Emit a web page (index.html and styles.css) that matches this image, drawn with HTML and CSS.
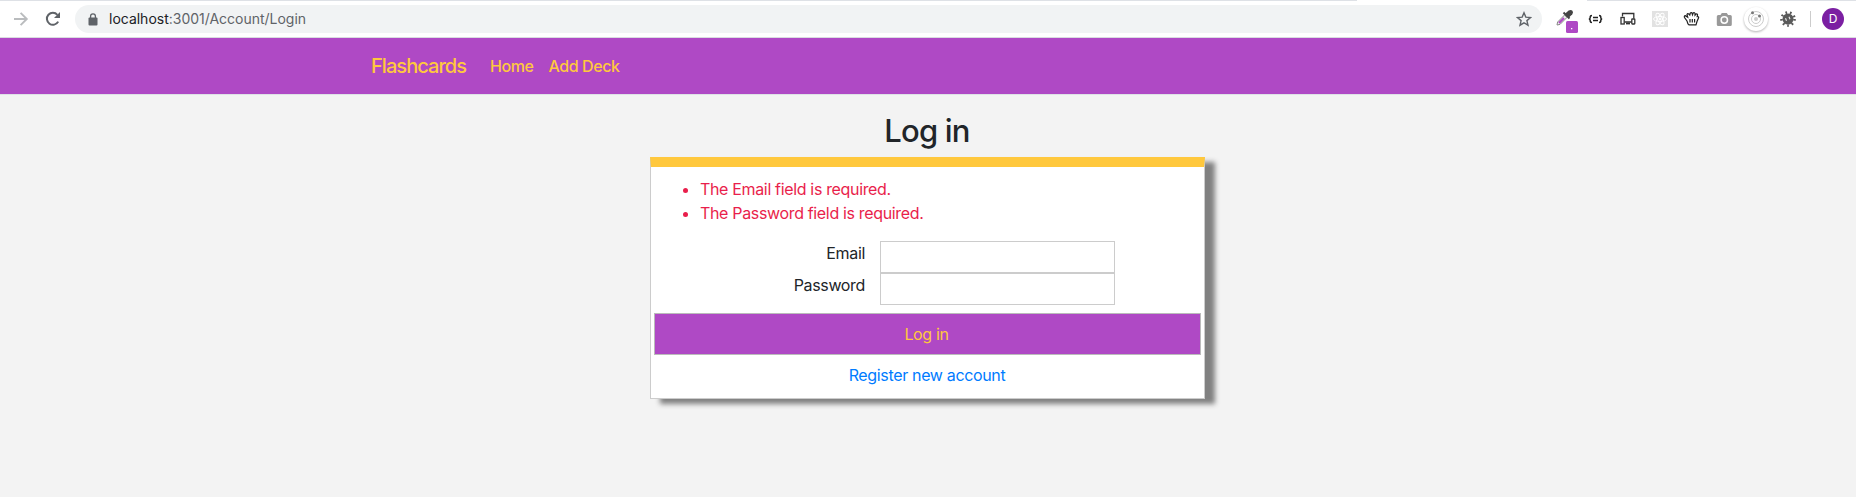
FILE: index.html
```html
<!DOCTYPE html>
<html lang="en">
<head>
<meta charset="utf-8">
<title>Log in</title>
<link rel="stylesheet" href="styles.css">
</head>
<body>
<div class="toolbar">
  <svg class="forward" width="16" height="16" viewBox="0 0 16 16" fill="none" stroke="#babcbe" stroke-width="1.9"><path d="M1 8h12.5M7.6 1.8 13.8 8l-6.2 6.2"/></svg>
  <svg class="reload" width="16" height="16" viewBox="0 0 16 16"><path d="M13.2 10.6A6 6 0 1 1 12.4 3.8" fill="none" stroke="#5f6368" stroke-width="2"/><path d="M15 1v6H9z" fill="#5f6368"/></svg>
  <div class="address">
    <svg class="lock" width="10" height="13" viewBox="0 0 10 13"><rect x="0.5" y="4.5" width="9" height="8" rx="1" fill="#5f6368"/><path d="M2.6 5V3.2a2.4 2.4 0 0 1 4.8 0V5" fill="none" stroke="#5f6368" stroke-width="1.3"/></svg>
    <span class="url"><span class="host">localhost</span>:3001/Account/Login</span>
    <svg class="star" width="16" height="16" viewBox="0 0 16 16"><path d="m8 1.8 1.8 4.3 4.7.4-3.6 3.1 1.1 4.6L8 11.8l-4 2.4 1.1-4.6-3.6-3.1 4.7-.4z" fill="none" stroke="#5f6368" stroke-width="1.4"/></svg>
  </div>
  <div class="extensions">
    <!-- colour picker with badge -->
    <svg width="32" height="36" viewBox="0 0 32 36"><path d="m9 24 .6-3 7-7 2.4 2.4-7 7z" fill="#eee" stroke="#888" stroke-width="1"/><path d="m11 22 5-5" stroke="#b04ac4" stroke-width="2.2"/><path d="m15.500 11.500 6 6" stroke="#444" stroke-width="2"/><path d="m17 12.800 3.600-3.300q2.400-1.300 3.800.2 1.300 1.600-.1 3.600L21 16.500z" fill="#444"/><rect x="18" y="20" width="12" height="12" rx="1.5" fill="#af49c5"/><rect x="23" y="27" width="1.3" height="1.3" fill="#fff"/></svg>
    <!-- json viewer -->
    <svg width="32" height="36" viewBox="0 0 32 36" fill="none" stroke="#222" stroke-width="1.5"><path d="M12 14.500q-1.800 0-1.800 1.200v1q0 1.300-1.400 1.300 1.400 0 1.400 1.300v1q0 1.200 1.800 1.200M19 14.500q1.800 0 1.800 1.200v1q0 1.300 1.400 1.300-1.400 0-1.400 1.300v1q0 1.200-1.800 1.200"/><path d="M13 16.500h5M13 19.500h5" stroke-width="1.3"/></svg>
    <!-- responsive devices -->
    <svg width="32" height="36" viewBox="0 0 32 36" fill="none" stroke="#333" stroke-width="1.3"><path d="M10.500 15.500v-3h11.300v5M12.500 21h7"/><rect x="9" y="16.500" width="3.200" height="6.500"/><rect x="19.800" y="18" width="3" height="5" rx=".5"/><path d="M14 22.500h4" stroke-width="1.800"/></svg>
    <!-- react -->
    <svg width="32" height="36" viewBox="0 0 32 36" fill="none" stroke="#fff" stroke-width="1"><rect x="8" y="10" width="16" height="16" fill="#e2e2e2" stroke="none"/><ellipse cx="16" cy="18" rx="6.500" ry="2.500"/><ellipse cx="16" cy="18" rx="6.500" ry="2.500" transform="rotate(60 16 18)"/><ellipse cx="16" cy="18" rx="6.500" ry="2.500" transform="rotate(120 16 18)"/><circle cx="16" cy="18" r="1" fill="#fff"/></svg>
    <!-- hand -->
    <svg width="32" height="36" viewBox="0 0 32 36" fill="none" stroke="#222" stroke-width="1.200"><path d="m12 23-1-3-2.500-3.500q-.6-1.700.8-1.800l2.400 1.500-.7-2.700q.5-1.500 1.800-.5l1 1 .5-2q1.200-.8 1.800.3l.4 1.500.8-2q1.400-.5 1.700.6v1.800l1.300-1.400q1.500 0 1.200 1.300l-.3 1.500q1.700-.3 1.400 1.200L21 20.500l-1 3.300h-7z"/><path d="M14 18v3.500M16.300 18v3.500M18.600 18v3.500"/></svg>
    <!-- camera -->
    <svg width="32" height="36" viewBox="0 0 32 36"><path d="M10.300 14h2.200l1.300-2h5l1.300 2h2.200q1.500 0 1.500 1.500v8q0 1.500-1.500 1.500h-12q-1.500 0-1.500-1.500v-8q0-1.500 1.500-1.500z" fill="#999"/><circle cx="16.300" cy="19" r="3.200" fill="#999" stroke="#fff" stroke-width="1.500"/></svg>
    <!-- orbit -->
    <svg width="32" height="36" viewBox="0 0 32 36" fill="none"><circle class="disc" cx="16" cy="18" r="12" fill="#fff"/><g stroke="#ccc"><circle cx="16" cy="18" r="7.500"/><circle cx="16" cy="18" r="4.500"/></g><circle cx="16" cy="18" r="2" fill="#ccc"/><circle cx="12.500" cy="11.800" r="1.500" fill="#777"/><circle cx="19.500" cy="15" r="1.500" fill="#777"/></svg>
    <!-- bug gear -->
    <svg width="32" height="36" viewBox="0 0 32 36"><circle cx="16" cy="18" r="5.500" fill="#5a5a5a"/><circle cx="16" cy="18" r="6.500" fill="none" stroke="#5a5a5a" stroke-width="2.600" stroke-dasharray="1.700 2.838"/><path d="m13.500 17.200 1 2.500M17 15.800l1 2.500" stroke="#eee" stroke-width="1.100"/></svg>
  </div>
  <div class="divider"></div>
  <div class="avatar">D</div>
</div>
<nav class="navbar">
  <a class="brand">Flashcards</a>
  <a class="nav-link">Home</a>
  <a class="nav-link">Add Deck</a>
</nav>
<main>
  <h1>Log in</h1>
  <form class="card">
    <ul class="errors"><li>The Email field is required.</li><li>The Password field is required.</li></ul>
    <div class="row"><label for="email">Email</label><input id="email" type="text"></div>
    <div class="row"><label for="password">Password</label><input id="password" type="password"></div>
    <button type="button">Log in</button>
    <a class="register">Register new account</a>
  </form>
</main>
</body>
</html>
```
FILE: styles.css
```css
* { box-sizing: border-box; }
body { margin: 0; min-height: 497px; background: #f3f3f3; color: #212529; font: 16px/24px Inter, sans-serif; letter-spacing: -0.34px; }
svg { display: block; flex: none; }
.toolbar { display: flex; align-items: center; height: 38px; padding: 1px 0 0 13px; border-bottom: 1px solid #dadce0; background: linear-gradient(90deg, #dee1e6 1357px, #fff 1357px 1587px, #dee1e6 1587px) 0 0 / 100% 1px no-repeat, #fff; }
.reload { margin-left: 16px; }
.address { display: flex; align-items: center; width: 1467px; height: 28px; margin-left: 14px; padding: 0 10px 0 13px; border-radius: 14px; background: #f1f3f4; }
.url { margin-left: 11px; color: #5f6368; font-size: 14px; letter-spacing: -0.01px; }
.host { color: #202124; }
.star { margin-left: auto; }
.extensions { display: flex; margin-left: 6px; }
.disc { filter: drop-shadow(0 1px 1px rgba(0, 0, 0, .3)); }
.divider { width: 1px; height: 16px; margin-left: 6px; background: #ccc; }
.avatar { margin-left: 11px; width: 22px; height: 22px; border-radius: 50%; background: #7b1fa2; color: #fff; font-size: 12px; line-height: 22px; text-align: center; }
.navbar { display: flex; align-items: center; height: 57px; padding-left: 371px; background: #af49c5; border-bottom: 1px solid #dee2e6; color: #ffc83d; font-weight: 500; }
.brand { width: 119px; font-size: 20px; letter-spacing: -0.95px; }
.nav-link { margin-right: 15px; letter-spacing: -0.42px; }
main { display: flex; flex-direction: column; align-items: center; }
h1 { margin: 18px 2px 8px 0; font-size: 31px; line-height: 36px; font-weight: 500; letter-spacing: -0.8px; }
.card { display: flex; flex-direction: column; width: 555px; height: 242px; margin-right: 1px; padding: 10px 3px 0; background: #fff; border: 1px solid #ccc; border-top: 10px solid #ffc83d; box-shadow: 10px 5px 5px gray; }
.errors { margin: 0 0 16px; padding-left: 46px; color: #e91e4b; }
.row { display: flex; gap: 15px; }
label { width: 211px; text-align: right; }
input { width: 235px; height: 32px; border: 1px solid #ccc; background: #fff; }
button { height: 42px; margin: 8px 0; padding: 0 2px 0 0; border: 1px solid #bbb; background: #af49c5; color: #ffc83d; font: inherit; letter-spacing: inherit; }
.register { padding-right: 1px; text-align: center; color: #007bff; }
```
